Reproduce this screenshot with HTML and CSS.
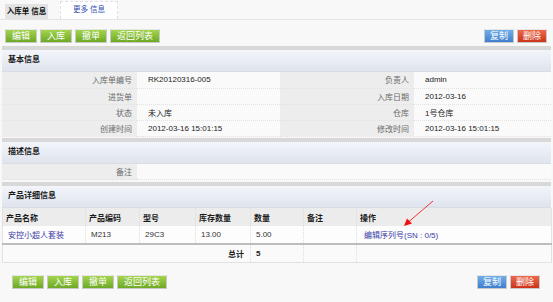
FILE: index.html
```html
<!DOCTYPE html>
<html>
<head>
<meta charset="utf-8">
<link rel="stylesheet" href="styles.css">
</head>
<body>
<div class="page">
  <div class="tabs">
    <div class="tab tab-active">入库单 信息</div>
    <div class="tab tab-more">更多 信息</div>
  </div>

  <div class="toolbar">
    <div class="btn-group">
      <span class="btn btn-green">编辑</span>
      <span class="btn btn-green">入库</span>
      <span class="btn btn-green">撤单</span>
      <span class="btn btn-green">返回列表</span>
    </div>
    <div class="btn-group">
      <span class="btn btn-blue">复制</span>
      <span class="btn btn-red">删除</span>
    </div>
  </div>

  <div class="section section-first">
    <div class="section-head">基本信息</div>
    <table class="info">
      <colgroup><col class="c-l1"><col class="c-v1"><col class="c-l2"><col class="c-v2"></colgroup>
      <tr><td class="lbl">入库单编号</td><td class="val">RK20120316-005</td><td class="lbl">负责人</td><td class="val">admin</td></tr>
      <tr><td class="lbl">进货单</td><td class="val"></td><td class="lbl">入库日期</td><td class="val">2012-03-16</td></tr>
      <tr><td class="lbl">状态</td><td class="val">未入库</td><td class="lbl">仓库</td><td class="val">1号仓库</td></tr>
      <tr><td class="lbl">创建时间</td><td class="val">2012-03-16 15:01:15</td><td class="lbl">修改时间</td><td class="val">2012-03-16 15:01:15</td></tr>
    </table>
  </div>

  <div class="section section-second">
    <div class="section-head">描述信息</div>
    <table class="info">
      <colgroup><col class="c-l1"><col class="c-rest"></colgroup>
      <tr><td class="lbl">备注</td><td class="val"></td></tr>
    </table>
  </div>

  <div class="section section-third">
    <div class="section-head">产品详细信息</div>
    <table class="products">
      <colgroup>
        <col class="p1"><col class="p2"><col class="p3"><col class="p4"><col class="p5"><col class="p6"><col class="p7">
      </colgroup>
      <tr class="p-head"><th>产品名称</th><th>产品编码</th><th>型号</th><th>库存数量</th><th>数量</th><th>备注</th><th>操作</th></tr>
      <tr class="p-row"><td><a class="link">安控小超人套装</a></td><td>M213</td><td>29C3</td><td>13.00</td><td>5.00</td><td></td><td class="op"><a class="link">编辑序列号(SN : 0/5)</a></td></tr>
      <tr class="p-total"><td colspan="4" class="total-lbl">总计</td><td class="total-val">5</td><td></td><td></td></tr>
    </table>
    <svg class="arrow" width="40" height="32" viewBox="0 0 40 32">
      <line x1="33" y1="3" x2="9" y2="23.5" stroke="#ee3333" stroke-width="1"/>
      <polygon points="4,28 7,20.5 12,25.5" fill="#ee1111"/>
    </svg>
  </div>

  <div class="toolbar toolbar-bottom">
    <div class="btn-group">
      <span class="btn btn-green">编辑</span>
      <span class="btn btn-green">入库</span>
      <span class="btn btn-green">撤单</span>
      <span class="btn btn-green">返回列表</span>
    </div>
    <div class="btn-group">
      <span class="btn btn-blue">复制</span>
      <span class="btn btn-red">删除</span>
    </div>
  </div>
</div>
</body>
</html>
```

FILE: styles.css
```css
* { box-sizing: border-box; }
html, body { margin: 0; padding: 0; }
body {
  background: #f8f8f8;
  font-family: "Liberation Sans", "Noto Sans CJK SC", sans-serif;
  font-size: 8px;
  color: #333;
  width: 553px;
  height: 302px;
  overflow: hidden;
}
.page { position: relative; }

.tabs {
  display: flex;
  align-items: flex-end;
  gap: 12px;
  height: 20px;
  padding: 0 5px;
  border-bottom: 1px solid #e4e4e4;
}
.tab {
  font-size: 7.5px;
  text-align: center;
  white-space: nowrap;
}
.tab-active {
  width: 43px;
  height: 15px;
  line-height: 15px;
  background: #e3e3e3;
  font-weight: bold;
  color: #111;
}
.tab-more {
  width: 58px;
  height: 18px;
  line-height: 16px;
  background: #fff;
  border: 1px dashed #e4dce6;
  border-bottom: none;
  color: #2f4eb0;
}

.toolbar {
  display: flex;
  justify-content: space-between;
  margin-top: 9px;
  padding: 0 6px 0 5px;
  height: 14px;
}
.toolbar-bottom {
  margin-top: 12px;
  padding: 0 13px 0 12px;
}
.btn-group { display: flex; gap: 3px; }
.btn {
  display: inline-block;
  height: 14px;
  line-height: 12px;
  padding: 0 6px;
  font-size: 9px;
  color: #fff;
  white-space: nowrap;
  border: 1px solid #c9c9c9;
  border-top-color: #e6e6e6;
}
.btn-green { background: linear-gradient(#a3d44e, #6ea925); }
.btn-blue { background: linear-gradient(#73aee8, #3f7fce); padding: 0 5px; }
.btn-red { background: linear-gradient(#ec6a4c, #cc3318); padding: 0 5px; }

.section {
  margin: 0 2px;
  border-top: 4px solid #d8d8d8;
  position: relative;
}
.section-first { margin-top: 3px; }
.section-second { margin-top: 1px; }
.section-third { margin-top: 2px; }
.section-head {
  height: 22px;
  line-height: 20px;
  padding-left: 6px;
  font-size: 8px;
  font-weight: bold;
  color: #1a1a1a;
  background: linear-gradient(#f2f5fa, #dfe4ed);
  border-bottom: 1px solid #d8dde5;
}

table { border-collapse: collapse; table-layout: fixed; width: 549px; }
td, th { padding: 0; }

.c-l1 { width: 135px; }
.c-v1 { width: 143px; }
.c-l2 { width: 134px; }
.c-v2 { width: 137px; }
.c-rest { width: 414px; }

.info tr { height: 16px; }
.info td {
  border-bottom: 1px dotted #e2e2e2;
  white-space: nowrap;
}
.info .lbl {
  background: #ededed;
  text-align: right;
  padding-right: 5px;
  color: #6a6a6a;
}
.info .val {
  background: #fafafa;
  padding-left: 11px;
  color: #222;
}

.p1 { width: 83px; }
.p2 { width: 54px; }
.p3 { width: 56px; }
.p4 { width: 55px; }
.p5 { width: 53px; }
.p6 { width: 53px; }
.p7 { width: 195px; }

.products { border: 1px solid #e2e2e2; border-top: none; }
.products th, .products td {
  text-align: left;
  white-space: nowrap;
  border-left: 1px dotted #dedede;
}
.products th:first-child, .products td:first-child { border-left: none; }
.p-head { height: 18px; background: #ececec; }
.p-head th {
  padding-left: 3px;
  font-weight: bold;
  color: #1a1a1a;
}
.p-row { height: 18px; background: #fdfdfd; border-bottom: 2px solid #bdbdbd; }
.p-row td { padding-left: 5px; color: #333; }
.p-row td.op { padding-left: 7px; }
.link { color: #3b3ba6; text-decoration: none; }
.p-total { height: 18px; background: #fafafa; }
.p-total td { font-weight: bold; color: #222; }
.total-lbl { text-align: right !important; padding-right: 6px; }
.total-val { padding-left: 5px; }

.arrow {
  position: absolute;
  left: 398px;
  top: 12px;
}
```
